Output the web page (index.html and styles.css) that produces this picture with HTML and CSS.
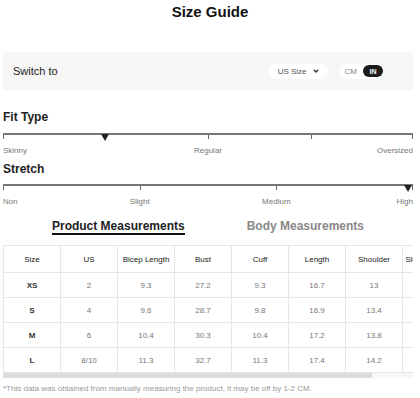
FILE: index.html
```html
<!DOCTYPE html>
<html lang="en">
<head>
    <meta charset="UTF-8">
    <meta name="viewport" content="width=device-width, initial-scale=1.0">
    <title>Size Guide</title>
    <link rel="stylesheet" href="styles.css">
</head>
<body>
    <h1 class="title">Size Guide</h1>

    <div class="switch-bar">
        <span class="switch-label">Switch to</span>
        <div class="switch-controls">
            <span class="size-select">US Size
                <svg width="6" height="4" viewBox="0 0 6 4"><path d="M0.8 0.8 L3 3 L5.2 0.8" fill="none" stroke="#333" stroke-width="1.3"/></svg>
            </span>
            <span class="unit-toggle">
                <span class="unit">CM</span>
                <span class="unit unit-active">IN</span>
            </span>
        </div>
    </div>

    <!-- Fit Type -->
    <div class="scale scale-fit">
        <h3 class="scale-title">Fit Type</h3>
        <div class="track">
            <div class="ticks ticks-fit"><span></span><span></span><span></span></div>
            <span class="pointer" style="left: 24.9%"></span>
        </div>
        <div class="scale-labels labels-fit">
            <span class="lbl-start">Skinny</span>
            <span class="lbl-mid1">Regular</span>
            <span class="lbl-end">Oversized</span>
        </div>
    </div>

    <!-- Stretch -->
    <div class="scale scale-stretch">
        <h3 class="scale-title">Stretch</h3>
        <div class="track">
            <div class="ticks ticks-stretch"><span></span><span></span><span></span></div>
            <span class="pointer" style="left: 98.8%"></span>
        </div>
        <div class="scale-labels labels-stretch">
            <span class="lbl-start">Non</span>
            <span class="lbl-mid1">Slight</span>
            <span class="lbl-mid2">Medium</span>
            <span class="lbl-end">High</span>
        </div>
    </div>

    <div class="tabs">
        <a class="tab active">Product Measurements</a>
        <a class="tab">Body Measurements</a>
    </div>

    <div class="table-wrap">
        <table class="size-table">
            <thead>
                <tr>
                    <th>Size</th><th>US</th><th>Bicep Length</th><th>Bust</th><th>Cuff</th><th>Length</th><th>Shoulder</th><th>Sleeve Length</th>
                </tr>
            </thead>
            <tbody>
                <tr><td class="size">XS</td><td>2</td><td>9.3</td><td>27.2</td><td>9.3</td><td>16.7</td><td>13</td><td>20.6</td></tr>
                <tr><td class="size">S</td><td>4</td><td>9.6</td><td>28.7</td><td>9.8</td><td>16.9</td><td>13.4</td><td>21</td></tr>
                <tr><td class="size">M</td><td>6</td><td>10.4</td><td>30.3</td><td>10.4</td><td>17.2</td><td>13.8</td><td>21.3</td></tr>
                <tr><td class="size">L</td><td>8/10</td><td>11.3</td><td>32.7</td><td>11.3</td><td>17.4</td><td>14.2</td><td>21.7</td></tr>
            </tbody>
        </table>
    </div>
    <div class="scroll-track"><div class="scroll-thumb" style="width: 90%"></div></div>

    <p class="note">*This data was obtained from manually measuring the product, it may be off by 1-2 CM.</p>
</body>
</html>
```
FILE: styles.css
```css
body {
    font-family: "Liberation Sans", Arial, sans-serif;
    margin: 0;
    padding: 0 7px 0 3px;
    color: #222;
    background: #fff;
}
.title {
    margin: 0 -7px 28px -3px;
    font-size: 15px;
    line-height: 24px;
    text-align: center;
    color: #111;
}
.switch-bar {
    height: 38px;
    background-color: #f6f6f6;
    display: flex;
    align-items: center;
    justify-content: space-between;
    padding: 0 30px 0 10px;
}
.switch-label {
    font-size: 11px;
    color: #222;
}
.switch-controls {
    display: flex;
    align-items: center;
    gap: 11px;
}
.size-select {
    display: flex;
    align-items: center;
    gap: 6px;
    height: 15px;
    padding: 0 9px 0 10px;
    background: #fff;
    border-radius: 8px;
    font-size: 8px;
    color: #555;
}
.unit-toggle {
    display: flex;
    align-items: center;
    height: 15px;
    padding: 0 0 0 6px;
    background: #fff;
    border-radius: 8px;
    font-size: 8px;
    color: #888;
}
.unit {
    padding-right: 6px;
}
.unit-active {
    display: flex;
    align-items: center;
    justify-content: center;
    width: 20px;
    height: 12px;
    padding: 0;
    border-radius: 6px;
    background: #1c1c1c;
    color: #fff;
    font-weight: bold;
    font-size: 7px;
}
.scale-title {
    margin: 0;
    font-size: 12px;
    line-height: 16px;
    color: #222;
}
.scale-fit {
    margin-top: 19px;
}
.scale-stretch {
    margin-top: 5px;
}
.track {
    position: relative;
    border-top: 2px solid #777;
    margin-top: 8px;
}
.scale-stretch .track {
    margin-top: 7px;
}
.ticks {
    display: grid;
    height: 4px;
}
.ticks span {
    border-left: 1px solid #666;
}
.ticks span:last-child {
    border-right: 1px solid #666;
}
.ticks-fit {
    grid-template-columns: 2fr 1fr 1fr;
}
.ticks-stretch {
    grid-template-columns: 1fr 1fr 1fr;
}
.pointer {
    position: absolute;
    top: -1px;
    width: 0;
    height: 0;
    border-left: 4px solid transparent;
    border-right: 4px solid transparent;
    border-top: 7px solid #222;
    transform: translateX(-50%);
}
.scale-labels {
    display: grid;
    margin-top: 7px;
    font-size: 8px;
    line-height: 10px;
    color: #777;
}
.labels-fit {
    grid-template-columns: repeat(4, 1fr);
}
.labels-stretch {
    grid-template-columns: repeat(6, 1fr);
}
.lbl-start {
    grid-column: 1;
    justify-self: start;
}
.lbl-mid1 {
    grid-column: 2 / span 2;
    text-align: center;
}
.lbl-mid2 {
    grid-column: 4 / span 2;
    text-align: center;
}
.labels-fit .lbl-end {
    grid-column: 4;
    justify-self: end;
}
.labels-stretch .lbl-end {
    grid-column: 6;
    justify-self: end;
}
.tabs {
    display: flex;
    justify-content: center;
    gap: 62px;
    margin-top: 12px;
}
.tab {
    font-size: 12px;
    font-weight: bold;
    line-height: 14px;
    color: #888;
    padding-bottom: 2px;
    cursor: pointer;
}
.tab.active {
    color: #222;
    padding-bottom: 0;
    border-bottom: 2px solid #111;
}
.table-wrap {
    margin-top: 10px;
    overflow: hidden;
}
.scroll-track {
    height: 5px;
    background: #f7f7f7;
}
.scroll-thumb {
    height: 100%;
    background: #dcdcdc;
}
.size-table {
    border-collapse: collapse;
    table-layout: fixed;
    width: 453px;
    font-size: 8px;
}
.size-table th,
.size-table td {
    width: 56px;
    padding: 0;
    border: 1px solid #e6e6e6;
    text-align: center;
    white-space: nowrap;
    overflow: hidden;
}
.size-table th {
    height: 26px;
    font-weight: normal;
    color: #222;
}
.size-table td {
    height: 24px;
    color: #777;
}
.size-table td.size {
    font-weight: bold;
    color: #333;
}
.note {
    margin: 6px 0 0;
    font-size: 8px;
    line-height: 10px;
    color: #999;
}
```
